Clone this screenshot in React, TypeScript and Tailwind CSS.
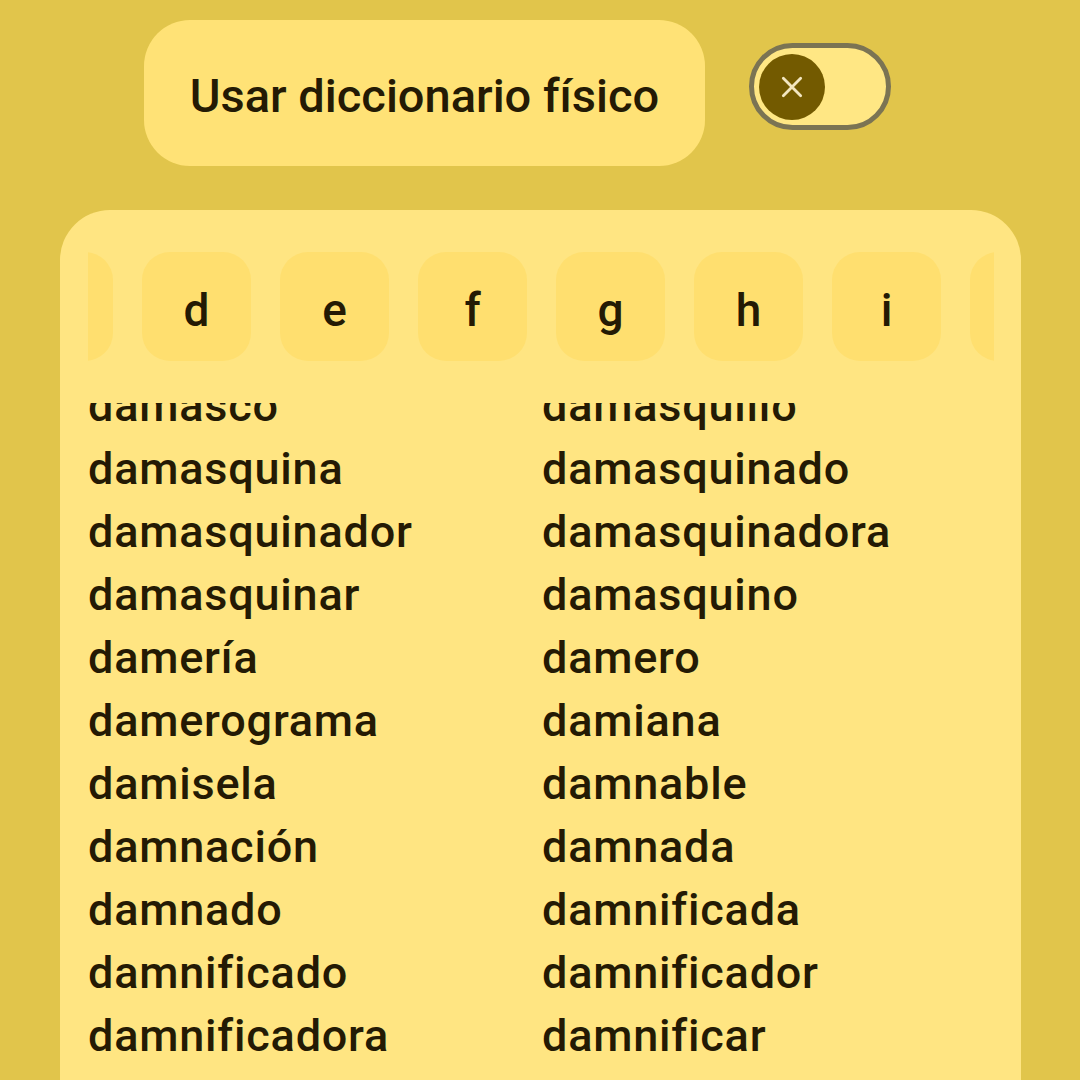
import React from 'react';

const letters = ['c', 'd', 'e', 'f', 'g', 'h', 'i', 'j'];

const words = [
  ['damasco', 'damasquillo'],
  ['damasquina', 'damasquinado'],
  ['damasquinador', 'damasquinadora'],
  ['damasquinar', 'damasquino'],
  ['damería', 'damero'],
  ['damerograma', 'damiana'],
  ['damisela', 'damnable'],
  ['damnación', 'damnada'],
  ['damnado', 'damnificada'],
  ['damnificado', 'damnificador'],
  ['damnificadora', 'damnificar'],
  ['damnificación', 'damno'],
];

export default function App() {
  return (
    <div
      className="w-[1080px] h-[1080px] overflow-hidden bg-[#E1C54B] text-[#241A04]"
      style={{ fontFamily: 'Roboto, "Noto Sans", sans-serif' }}
    >
      {/* Top: label + switch */}
      <div className="flex items-start pt-[20px] pl-[144px]">
        <div className="w-[561px] h-[146px] rounded-[46px] bg-[#FFE276] flex items-center justify-center pt-[6px]">
          <span className="text-[47px] font-medium">Usar diccionario físico</span>
        </div>
        <div className="mt-[23px] ml-[44px] w-[142px] h-[87px] rounded-full border-[5px] border-[#7B7453] bg-[#FFE784] flex items-center pl-[5px]">
          <div className="w-[66px] h-[66px] rounded-full bg-[#735A00] flex items-center justify-center">
            <svg width="32" height="32" viewBox="0 0 24 24" fill="none" stroke="#F3E6C0" strokeWidth="2.1" strokeLinecap="round">
              <path d="M5.5 5.5l13 13M18.5 5.5l-13 13" />
            </svg>
          </div>
        </div>
      </div>

      {/* Panel */}
      <div className="mt-[44px] ml-[60px] w-[961px] h-[900px] rounded-t-[50px] bg-[#FFE582] pt-[42px] px-[28px]">
        <div className="w-[906px] overflow-hidden">
          <div className="flex gap-[29px] ml-[-84px]">
            {letters.map((l) => (
              <div
                key={l}
                className="shrink-0 w-[109px] h-[109px] rounded-[28px] bg-[#FFDF6F] flex items-center justify-center text-[46px] font-medium pt-[7px]"
              >
                {l}
              </div>
            ))}
          </div>
        </div>

        <div className="mt-[42px] h-[700px] overflow-hidden">
          <div className="mt-[-29px] grid grid-cols-[454px_1fr]">
            {words.map(([a, b]) => (
              <React.Fragment key={a}>
                <div className="h-[63px] leading-[63px] text-[45px] font-medium tracking-[0.8px]">{a}</div>
                <div className="h-[63px] leading-[63px] text-[45px] font-medium tracking-[0.8px]">{b}</div>
              </React.Fragment>
            ))}
          </div>
        </div>
      </div>
    </div>
  );
}
